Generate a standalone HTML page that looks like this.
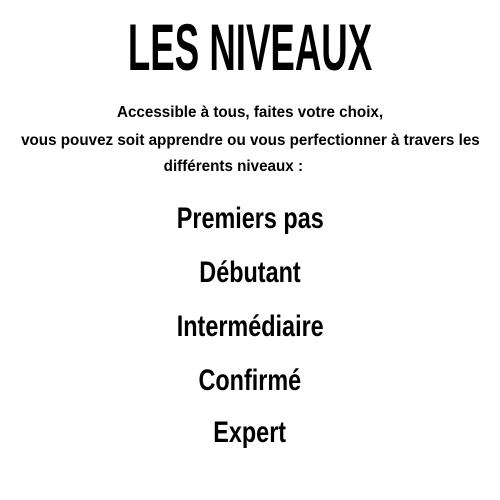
<!DOCTYPE html>
<html><head><meta charset="utf-8"><style>
html,body{margin:0;padding:0;background:#fff;width:500px;height:500px;overflow:hidden}
body{font-family:"Liberation Sans",sans-serif;color:#000;position:relative}
.l{position:absolute;left:0;width:500px;text-align:center;white-space:nowrap}
.l span{display:inline-block;transform-origin:center}
.t{top:14px;font-size:66px;line-height:66px;font-weight:bold}
.t span{transform:scaleX(0.555)}
.p{font-size:16px;line-height:20px;font-weight:bold}
.p span{transform:scaleX(0.95)}
.v{font-size:30px;line-height:34px;font-weight:bold}
.v span{transform:scaleX(0.78)}
</style></head><body>
<div class="l t"><span>LES NIVEAUX</span></div>
<div class="l p" style="top:103px"><span>Accessible à tous, faites votre choix,</span></div>
<div class="l p" style="top:131px"><span>vous pouvez soit apprendre ou vous perfectionner à travers les</span></div>
<div class="l p" style="top:157px;left:-17px"><span>différents niveaux :</span></div>
<div class="l v" style="top:202px"><span>Premiers pas</span></div>
<div class="l v" style="top:256px"><span>Débutant</span></div>
<div class="l v" style="top:310px"><span>Intermédiaire</span></div>
<div class="l v" style="top:364px"><span>Confirmé</span></div>
<div class="l v" style="top:416px"><span>Expert</span></div>
</body></html>
